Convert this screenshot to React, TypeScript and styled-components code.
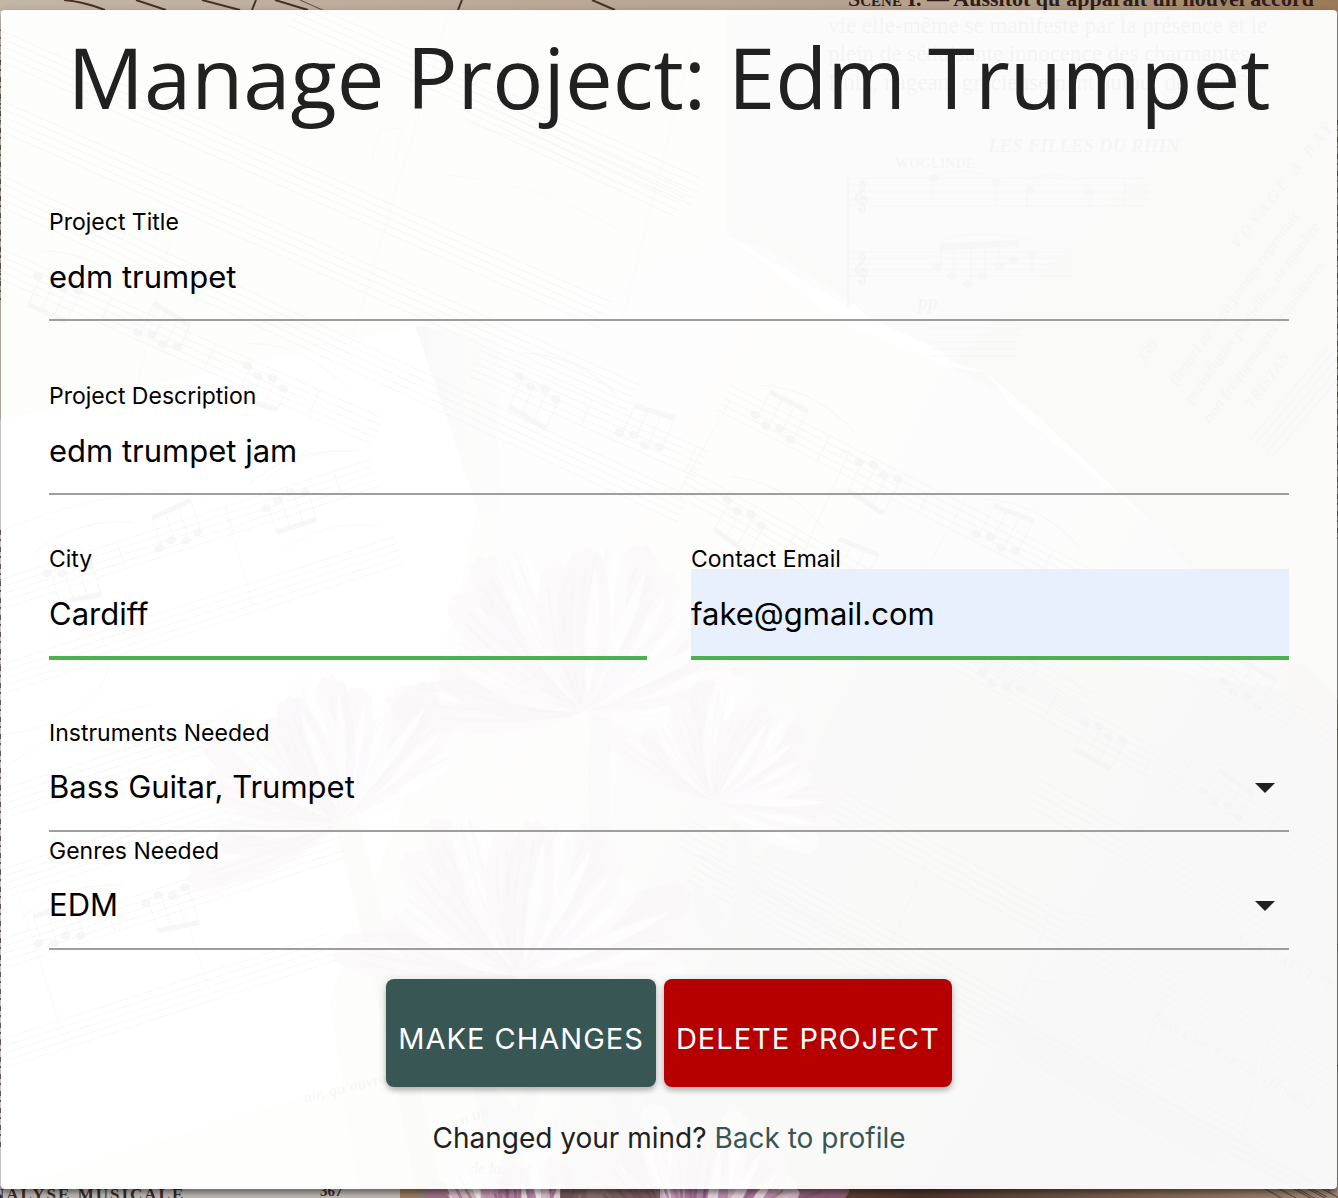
import React from "react";
import styled, { createGlobalStyle } from "styled-components";

const GlobalStyle = createGlobalStyle`
  *, *::before, *::after { box-sizing: border-box; }
  body {
    margin: 0;
    background: #b9ab9b;
    color: #212121;
    font-family: Inter, "Liberation Sans", sans-serif;
  }
`;

const Page = styled.main`
  position: relative;
  min-height: 100vh;
  padding: 10px 1px 9px;
  overflow: hidden;
`;

const Backdrop = styled.svg`
  position: absolute;
  inset: 0;
  width: 100%;
  height: 100%;
`;

const Card = styled.section`
  position: relative;
  padding: 20px 48px 33px;
  border-radius: 4px;
  background: rgba(255, 255, 255, 0.95);
  box-shadow: 0 4px 4px rgba(0, 0, 0, 0.3), 0 2px 8px rgba(0, 0, 0, 0.2);
`;

const Title = styled.h1`
  margin: 0 0 89px;
  font: 400 85px/93px "Open Sans", "Noto Sans", sans-serif;
  text-align: center;
`;

const Form = styled.form`
  display: flex;
  flex-direction: column;
`;

const Row = styled.div<{ $gap: number }>`
  display: grid;
  grid-template-columns: repeat(auto-fit, minmax(320px, 1fr));
  column-gap: 44px;
  margin-bottom: ${(p) => p.$gap}px;
`;

const Field = styled.div`
  display: flex;
  flex-direction: column;
  min-width: 0;
`;

const Label = styled.label`
  color: #000;
  font-size: 23px;
  line-height: 20px;
`;

const controlFont = `
  width: 100%;
  height: 89px;
  margin: 0;
  padding: 2px 0 0;
  border: 0;
  border-bottom: 2px solid #9e9e9e;
  border-radius: 0;
  outline: 0;
  background: transparent;
  color: #000;
  font: 400 31px Inter, "Liberation Sans", sans-serif;
`;

const TextInput = styled.input<{ $valid?: boolean; $filled?: boolean }>`
  ${controlFont}
  ${(p) => p.$valid && "border-bottom-color: #4caf50; box-shadow: 0 2px 0 #4caf50;"}
  ${(p) => p.$filled && "background: #e8f0fe;"}
`;

const SelectBox = styled.div`
  display: grid;
  align-items: center;

  > * { grid-area: 1 / 1; }
`;

const Select = styled.select`
  ${controlFont}
  padding: 0;
  appearance: none;
`;

const Caret = styled.svg`
  justify-self: end;
  width: 20px;
  height: 10px;
  margin-right: 14px;
  pointer-events: none;
`;

const Actions = styled.div`
  display: flex;
  flex-wrap: wrap;
  justify-content: center;
  gap: 8px;
`;

const Button = styled.button<{ $color: string }>`
  height: 108px;
  padding: 10px 12px 0;
  border: 0;
  border-radius: 8px;
  background: ${(p) => p.$color};
  color: #fff;
  font: 400 29px Inter, "Liberation Sans", sans-serif;
  letter-spacing: 1px;
  text-transform: uppercase;
  box-shadow: 0 4px 4px rgba(0, 0, 0, 0.14), 0 2px 8px rgba(0, 0, 0, 0.2);
  cursor: pointer;
`;

const Footer = styled.p`
  margin: 33px 0 0;
  font-size: 28px;
  line-height: 36px;
  text-align: center;
`;

const Link = styled.a`
  color: #385654;
  text-decoration: none;
`;

type StaffProps = {
  x: number;
  y: number;
  angle: number;
  length: number;
  step?: number;
  seed?: number;
  plain?: boolean;
};

function Staff({ x, y, angle, length, step = 7, seed = 1, plain }: StaffProps) {
  const groups = plain ? [] : Array.from({ length: Math.floor(length / 120) }, (_, i) => i);
  return (
    <g transform={`translate(${x} ${y}) rotate(${angle})`} stroke="#3a2a2c" fill="none">
      {[0, 1, 2, 3, 4].map((n) => (
        <path key={n} d={`M0 ${n * step}H${length}`} strokeOpacity="0.7" />
      ))}
      {groups.map((i) => {
        const gx = 25 + i * 120 + ((i * 17 + seed * 11) % 23);
        const dir = (i + seed) % 2 ? 1 : -1;
        const base = dir > 0 ? 18 : 10;
        const beam = base - dir * 30;
        const tilt = ((i + seed) % 3) * 5 - 5;
        return (
          <g key={i} strokeOpacity="0.7">
            {[0, 1, 2, 3].map((k) => {
              const ny = base + ((k * 5 + i * 3 + seed) % 9) - 4;
              return (
                <g key={k}>
                  <ellipse cx={gx + k * 14} cy={ny} rx="5" ry="4" fill="#3a2a2c" fillOpacity="0.7" stroke="none" />
                  <path d={`M${gx + k * 14 + 3} ${ny}V${beam + (tilt * k) / 3}`} />
                </g>
              );
            })}
            <path d={`M${gx + 3} ${beam}l42 ${tilt}`} strokeWidth="5" />
            {i % 2 === 0 && <path d={`M${gx - 8} -14q50 -22 106 0`} />}
            <path d={`M${gx + 76} 0V${step * 4}`} />
          </g>
        );
      })}
    </g>
  );
}

function Flower({ x, y, size, turn = 0 }: { x: number; y: number; size: number; turn?: number }) {
  const petals = [-88, 84, -76, 70, -62, 58, -50, 44, -36, 32, -24, 20, -12, 8, 0];
  return (
    <g transform={`translate(${x} ${y}) rotate(${turn}) scale(${size})`}>
      {petals.map((a, i) => (
        <g key={a} transform={`rotate(${a}) scale(1 ${1 - ((i * 7) % 5) * 0.06})`}>
          <path
            d="M0 0C-26 -40 -30 -110 -14 -160Q-8 -176 -3 -168Q2 -180 8 -166Q16 -170 17 -150C28 -100 22 -40 0 0Z"
            fill={["#b87fa4", "#e8d2e0", "#a0688e"][i % 3]}
            fillOpacity="0.7"
          />
          <path d="M2 -14C12 -60 16 -110 8 -150C2 -110 -2 -60 2 -14Z" fill="#fff" fillOpacity="0.65" />
          <path d="M-3 -8C-14 -60 -14 -100 -9 -146M-1 -20C-4 -70 -3 -110 0 -150" fill="none" stroke="#7d4668" strokeOpacity="0.45" strokeWidth="3" />
        </g>
      ))}
    </g>
  );
}

function SheetMusic() {
  return (
    <Backdrop viewBox="0 0 1338 1198" preserveAspectRatio="xMidYMid slice" aria-hidden="true">
      <defs>
        <linearGradient id="table" x1="0" x2="1">
          <stop offset="0" stopColor="#c2b6a6" />
          <stop offset="0.5" stopColor="#b9a693" />
          <stop offset="0.75" stopColor="#b3a08c" />
          <stop offset="1" stopColor="#9b7a57" />
        </linearGradient>
        <linearGradient id="shade" x1="0" x2="1" y1="0.2" y2="0.6">
          <stop offset="0" stopColor="#e4dfda" stopOpacity="0" />
          <stop offset="0.35" stopColor="#706866" />
          <stop offset="1" stopColor="#86766c" />
        </linearGradient>
        <linearGradient id="page" x1="0" x2="1" y1="0" y2="0.6">
          <stop offset="0" stopColor="#e6dbd4" />
          <stop offset="0.6" stopColor="#cfc4bc" />
          <stop offset="1" stopColor="#968a84" />
        </linearGradient>
        <linearGradient id="floor" x1="0" x2="1">
          <stop offset="0" stopColor="#6a4c3c" />
          <stop offset="0.3" stopColor="#4d342a" />
          <stop offset="1" stopColor="#a38a76" />
        </linearGradient>
        <linearGradient id="fold" x1="0" x2="1">
          <stop offset="0" stopColor="#7d7773" stopOpacity="0.9" />
          <stop offset="0.6" stopColor="#d5cbc4" stopOpacity="0" />
        </linearGradient>
      </defs>
      <rect width="1338" height="1198" fill="url(#table)" />
      <path d="M0 11H727V235L1030 410L1160 530L1338 900V1198H0Z" fill="#dacfc8" />
      <path d="M727 11H1300L945 372L727 235Z" fill="#bfb2aa" />
      <path d="M1300 11H1338V700L1160 530L945 372Z" fill="#a39690" />
      <path d="M500 330L727 235L850 312L1030 410L1160 530L1338 760V1198H500Z" fill="url(#page)" />
      <path d="M560 560L1338 700V1198H560Z" fill="url(#shade)" fillOpacity="0.7" />
      <path d="M727 235L770 250L850 300L868 318L940 350L950 362L985 372L945 366L840 322Z" fill="#fff" />
      <path d="M985 372L1030 410L1160 530L1020 415Z" fill="#fff" fillOpacity="0.7" />
      <path d="M727 235L770 230L858 300L850 308Z" fill="#7f7672" fillOpacity="0.5" />
      <path d="M0 420L415 325L478 510L420 760L330 1000L360 1198H0Z" fill="#f6f4f2" />
      <path d="M415 325L545 350L600 520L478 510Z" fill="url(#fold)" />
      <path d="M0 1190L290 1100L480 1060V1198H0Z" fill="#d2cbc4" fillOpacity="0.6" />
      <path d="M740 1185H1338V1198H740Z" fill="url(#floor)" />
      <path d="M0 1186H400V1198H0Z" fill="#bcb6b0" />
      <path d="M400 1186H490V1198H400Z" fill="#9b7a60" />

      <Staff x={0} y={30} angle={24} length={670} seed={1} plain />
      <Staff x={0} y={100} angle={24} length={700} seed={2} plain />
      <Staff x={0} y={175} angle={25} length={760} seed={3} plain />
      <Staff x={0} y={248} angle={24} length={420} seed={4} />
      <Staff x={300} y={0} angle={24} length={440} seed={5} plain />
      <Staff x={470} y={90} angle={25} length={240} plain />
      <Staff x={480} y={350} angle={24} length={250} seed={2} />
      <path d="M450 10L350 345M690 50L620 330M170 240L130 420M380 130L372 160M402 128L396 158M380 130L402 128M445 175Q530 180 620 230M460 120Q560 150 620 185" stroke="#4a332b" strokeOpacity="0.4" fill="none" />

      <Staff x={0} y={580} angle={-18} length={390} seed={2} />
      <Staff x={0} y={665} angle={-18} length={415} seed={1} plain />
      <path d="M0 531Q90 495 170 490Q200 492 205 500M0 735Q90 725 110 665M10 764Q70 720 150 705M265 480Q300 450 360 450M285 550Q320 520 380 526" stroke="#4a3a38" strokeOpacity="0.6" fill="none" />
      <Staff x={0} y={790} angle={-18} length={230} plain />
      <Staff x={0} y={870} angle={-18} length={290} plain />
      <Staff x={0} y={940} angle={-18} length={355} seed={1} />
      <Staff x={0} y={1040} angle={-18} length={345} seed={4} plain />
      <path d="M225 510L255 610M85 590L108 655M10 870L65 1040M178 890L210 995" stroke="#4a332b" strokeOpacity="0.4" />

      <Staff x={730} y={385} angle={27} length={470} seed={1} />
      <Staff x={690} y={470} angle={29} length={460} seed={2} />
      <Staff x={960} y={640} angle={29} length={430} seed={3} />
      <Staff x={1200} y={650} angle={30} length={160} seed={1} />
      <Staff x={690} y={820} angle={29} length={740} seed={4} plain />
      <Staff x={840} y={790} angle={29} length={570} seed={2} plain />
      <Staff x={1040} y={780} angle={29} length={340} seed={2} plain />
      <Staff x={1000} y={1010} angle={29} length={390} seed={1} plain />
      <Staff x={700} y={855} angle={29} length={600} plain />
      <Staff x={1250} y={440} angle={-50} length={120} plain />
      <g fill="none" stroke="#3a2a2c" strokeOpacity="0.7">
        <path d="M1060 912Q1130 915 1160 960M1030 980Q1100 985 1125 1035M1175 972Q1240 980 1270 1025M1145 1060Q1215 1070 1240 1110" />
        <path d="M1050 910L1010 1030M1170 985L1130 1090M1275 1020L1240 1140M925 865L890 945M1205 740L1160 810M730 400L680 490M850 450L800 560M965 500L920 580" />
      </g>

      <Staff x={848} y={178} angle={0} length={300} plain />
      <Staff x={848} y={252} angle={0} length={225} step={6} plain />
      <Staff x={930} y={328} angle={0} length={90} plain />
      <g stroke="#4a3a38" strokeOpacity="0.6" fill="none">
        <path d="M848 178V310" strokeWidth="2" />
        <path d="M940 247L1018 243" strokeWidth="7" />
        <path d="M932 180V200M996 182V205M1027 190V212M1090 192V214M1125 178V206M941 247V266M954 247V275M971 246V283M985 245V275M999 244V260M1018 243V254M1032 254V276" />
        <path d="M935 176Q960 166 990 176M1028 180Q1060 166 1090 188M940 240Q980 228 1030 240" />
      </g>
      <g fill="#4a3a38" fillOpacity="0.6">
        {[[934, 178], [996, 182], [1030, 190], [1090, 192], [937, 267], [952, 276], [968, 284], [982, 276], [999, 266], [1013, 260], [1032, 254]].map(([cx, cy]) => (
          <ellipse key={cx} cx={cx} cy={cy} rx="5" ry="4" />
        ))}
      </g>

      <g fill="#2e1d1a" fillOpacity="0.8" fontFamily="Liberation Serif, serif" fontSize="22" fontWeight="700">
        <text x="848" y="6" fontSize="22" fillOpacity="1">
          <tspan fontVariant="small-caps">Scène</tspan> I. — Aussitôt qu'apparaît un nouvel accord
        </text>
        <g fontWeight="400" fontSize="23" fillOpacity="1">
          <text x="828" y="33">vie elle-même se manifeste par la présence et le</text>
          <text x="828" y="61">plein de séduisante innocence des charmantes</text>
          <text x="828" y="90">Rhin, nageant gracieusement autour de leur Or</text>
        </g>
        <text x="988" y="152" fontSize="19" fontStyle="italic">LES FILLES DU RHIN</text>
        <text x="895" y="168" fontSize="14">WOGLINDE</text>
        <text x="918" y="309" fontSize="20" fontStyle="italic">pp</text>
        <text x="852" y="205" fontSize="28">𝄞</text>
        <text x="852" y="277" fontSize="28">𝄞</text>
        <g fontSize="16" fontStyle="italic" fillOpacity="0.6">
          <text transform="translate(1238 250) rotate(-52)" letterSpacing="4">VOYAGE A BAY</text>
          <text transform="translate(1144 364) rotate(-52)">330</text>
          <text transform="translate(1176 386) rotate(-54)">(lequel ne sera jamais reproduit</text>
          <text transform="translate(1192 404) rotate(-54)">périodiques partielles, de nombre</text>
          <text transform="translate(1210 424) rotate(-54)">non fréquemment transitoires</text>
          <text transform="translate(1252 410) rotate(-54)">TRISTAN</text>
          <text transform="translate(1235 940) rotate(28)">TER WAYULTY</text>
          <text transform="translate(1150 1020) rotate(29)">Bass Clar. Cor Ob. (Hautb.)</text>
          <text transform="translate(305 1103) rotate(-14)">air, qu'ouvrage en un voile</text>
          <text transform="translate(455 1128) rotate(-20)">en un</text>
          <text x="470" y="1174">de la</text>
        </g>
      </g>

      <g fill="none" stroke="#7d807a" strokeLinecap="round">
        <path d="M605 690Q590 800 612 920" strokeWidth="22" strokeOpacity="0.6" />
        <path d="M340 800Q380 940 430 1198" strokeWidth="24" strokeOpacity="0.5" />
        <path d="M740 810V1060" strokeWidth="14" strokeOpacity="0.6" />
        <path d="M540 1060L500 1198M610 1060L650 1198" strokeWidth="18" strokeOpacity="0.4" />
      </g>
      <path d="M470 1070Q540 1110 520 1175Q480 1140 470 1070ZM695 885Q735 910 725 950Q690 930 695 885Z" fill="#777d78" fillOpacity="0.55" />
      <Flower x={585} y={710} size={1.15} />
      <Flower x={340} y={820} size={0.95} turn={-24} />
      <Flower x={715} y={800} size={0.75} turn={30} />
      <Flower x={520} y={975} size={1.1} turn={6} />
      <Flower x={530} y={1290} size={0.9} turn={-8} />
      <Flower x={700} y={1260} size={0.95} turn={6} />

      <path d="M560 1186H660V1198H560Z" fill="#5d473c" fillOpacity="0.7" />
      <g fontFamily="Liberation Serif, serif" fontWeight="700" fill="#3c2a24">
        <text x="-8" y="1200" fontSize="17" letterSpacing="2">NALYSE MUSICALE</text>
        <text x="320" y="1196" fontSize="15">367</text>
      </g>
      <path d="M64 0Q85 2 105 10M136 0L166 10M202 0L240 10M256 0L252 10M275 0L308 10M462 0L458 10M592 0L615 10" stroke="#4b3027" strokeWidth="2" fill="none" />
      <path d="M0 60V300M0 530V1150M1338 120V540" stroke="#46322d" strokeWidth="2" strokeOpacity="0.7" strokeDasharray="5 4 2 6" />
    </Backdrop>
  );
}

type TextFieldProps = {
  id: string;
  label: string;
  value: string;
  type?: string;
  valid?: boolean;
  filled?: boolean;
};

function TextField({ id, label, value, type = "text", valid, filled }: TextFieldProps) {
  return (
    <Field>
      <Label htmlFor={id}>{label}</Label>
      <TextInput id={id} type={type} defaultValue={value} $valid={valid} $filled={filled} />
    </Field>
  );
}

function SelectField({ id, label, options }: { id: string; label: string; options: string[] }) {
  return (
    <Field>
      <Label htmlFor={id}>{label}</Label>
      <SelectBox>
        <Select id={id} defaultValue={options[0]}>
          {options.map((option) => (
            <option key={option}>{option}</option>
          ))}
        </Select>
        <Caret viewBox="0 0 20 10" aria-hidden="true">
          <path d="M0 0H20L10 10Z" fill="#212121" />
        </Caret>
      </SelectBox>
    </Field>
  );
}

export default function App() {
  return (
    <>
      <GlobalStyle />
      <Page>
        <SheetMusic />
        <Card>
          <Title>Manage Project: Edm Trumpet</Title>
          <Form onSubmit={(event) => event.preventDefault()}>
            <Row $gap={65}>
              <TextField id="title" label="Project Title" value="edm trumpet" />
            </Row>
            <Row $gap={54}>
              <TextField id="description" label="Project Description" value="edm trumpet jam" />
            </Row>
            <Row $gap={65}>
              <TextField id="city" label="City" value="Cardiff" valid />
              <TextField id="email" label="Contact Email" type="email" value="fake@gmail.com" valid filled />
            </Row>
            <Row $gap={9}>
              <SelectField id="instruments" label="Instruments Needed" options={["Bass Guitar, Trumpet"]} />
            </Row>
            <Row $gap={29}>
              <SelectField id="genres" label="Genres Needed" options={["EDM"]} />
            </Row>
            <Actions>
              <Button type="submit" $color="#385654">Make Changes</Button>
              <Button type="button" $color="#b60000">Delete Project</Button>
            </Actions>
          </Form>
          <Footer>
            Changed your mind? <Link href="#profile">Back to profile</Link>
          </Footer>
        </Card>
      </Page>
    </>
  );
}
